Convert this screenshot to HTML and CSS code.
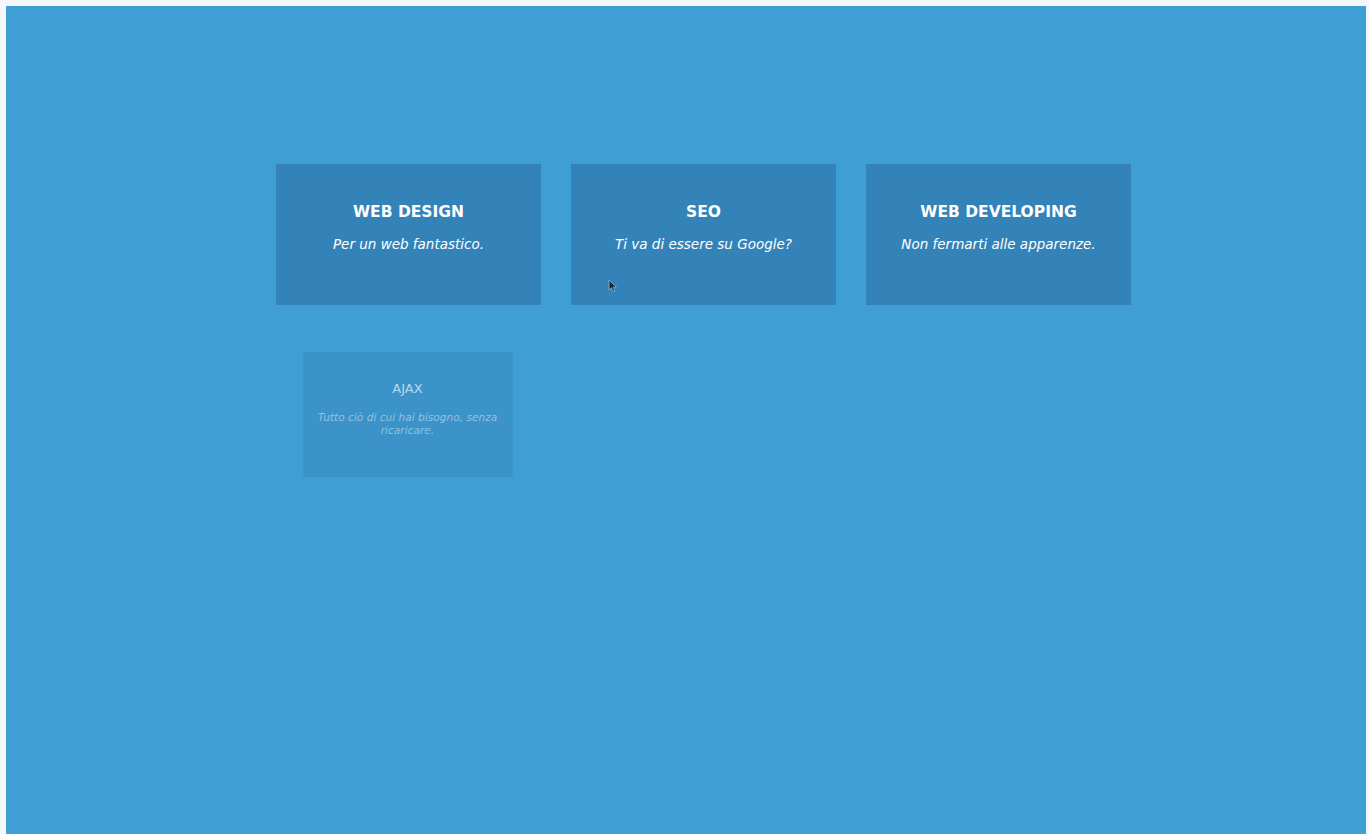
FILE: index.html
```html
<!DOCTYPE html>
<html lang="it">
<head>
<meta charset="utf-8">
<title>Servizi</title>
<link rel="stylesheet" href="styles.css">
</head>
<body>
<main class="stage">
  <section class="services">
    <article class="card">
      <h2 class="card-title">WEB DESIGN</h2>
      <p class="card-text">Per un web fantastico.</p>
    </article>
    <article class="card">
      <h2 class="card-title">SEO</h2>
      <p class="card-text">Ti va di essere su Google?</p>
    </article>
    <article class="card">
      <h2 class="card-title">WEB DEVELOPING</h2>
      <p class="card-text">Non fermarti alle apparenze.</p>
    </article>
    <article class="card card-entering">
      <h2 class="card-title">AJAX</h2>
      <p class="card-text">Tutto ciò di cui hai bisogno, senza ricaricare.</p>
    </article>
  </section>
  <svg class="pointer" width="10" height="14" viewBox="0 0 10 14">
    <path d="M1 1 L1 11 L3.5 8.8 L5.4 12.8 L7 12 L5.2 8.2 L8.4 8.2 Z" fill="#1b2a36" stroke="#8fb9d6" stroke-width="0.8"/>
  </svg>
</main>
</body>
</html>
```

FILE: styles.css
```css
html, body {
  margin: 0;
  height: 100%;
  background: #f4f8fb;
}

body {
  padding: 6px 3px 0 6px;
  box-sizing: border-box;
  overflow: hidden;
  font-family: "DejaVu Sans", "Liberation Sans", sans-serif;
}

.stage {
  position: relative;
  height: 100%;
  background: #3f9fd4;
}

.services {
  display: grid;
  grid-template-columns: repeat(3, 265px);
  column-gap: 30px;
  row-gap: 47px;
  padding: 158px 0 0 270px;
}

.card {
  height: 141px;
  box-sizing: border-box;
  padding-top: 38px;
  background: #3383b9;
  color: #ffffff;
  text-align: center;
}

.card-title {
  margin: 0;
  font-size: 15.5px;
  font-weight: 700;
  line-height: 20px;
}

.card-text {
  margin: 13px 0 0;
  font-size: 13.5px;
  font-style: italic;
  line-height: 18px;
}

/* fourth card mid-way through its fade-in */
.card-entering {
  width: 210px;
  height: 125px;
  justify-self: center;
  margin-left: -2px;
  padding: 29px 4px 0;
  background: #3b93c9;
  color: rgba(255, 255, 255, 0.65);
}

.card-entering .card-title {
  font-size: 13px;
  font-weight: 400;
  line-height: 16px;
}

.card-entering .card-text {
  margin-top: 14px;
  font-size: 10.6px;
  line-height: 13px;
  color: rgba(255, 255, 255, 0.45);
}

.pointer {
  position: absolute;
  left: 602px;
  top: 273px;
}
```
